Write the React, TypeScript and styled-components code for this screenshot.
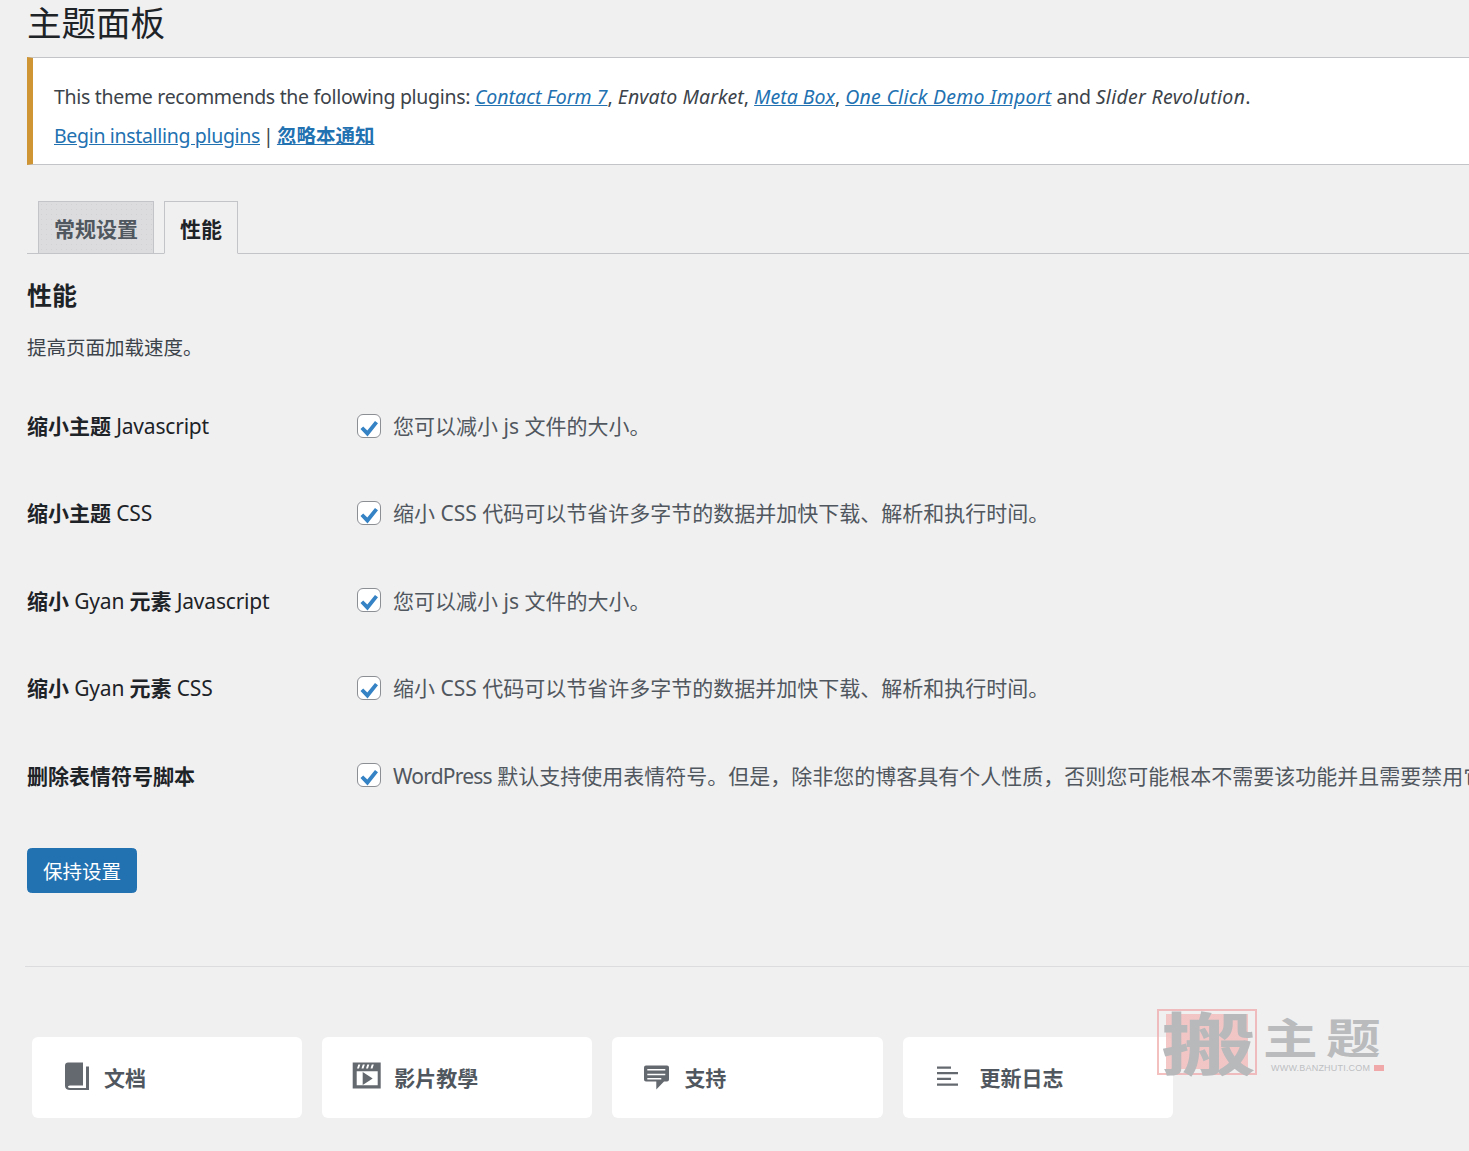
import React from 'react';
import styled, { createGlobalStyle } from 'styled-components';

const FONT = `"Noto Sans", "Noto Sans CJK SC", sans-serif`;

const GlobalStyle = createGlobalStyle`
	html, body {
		margin: 0;
		padding: 0;
		background: #f0f0f1;
	}
	body {
		font-family: ${FONT};
		color: #3c434a;
	}
`;

const Page = styled.div`
	position: relative;
	width: 1469px;
	height: 1151px;
	overflow: hidden;
	padding-left: 27px;
	box-sizing: border-box;
`;

const Title = styled.h1`
	margin: 0;
	height: 57px;
	font-size: 34.5px;
	font-weight: 400;
	line-height: 46px;
	color: #1d2327;
`;

const Notice = styled.div`
	width: 1500px;
	height: 108px;
	box-sizing: border-box;
	background: #fff;
	border: 1px solid #c3c4c7;
	border-left: 6px solid #cf9535;
	padding: 19px 0 0 21px;
	font-size: 19.5px;
	line-height: 39px;
	color: #3c434a;
`;

const NoticeLine = styled.div`
	white-space: nowrap;
`;

const Narrow = styled.span`
	letter-spacing: -0.31px;
`;

const Separator = styled.span`
	margin: 0 -2px;
`;

const Link = styled.a<{ $italic?: boolean; $bold?: boolean; $tracking?: number }>`
	color: #2271b1;
	text-decoration: underline;
	font-style: ${(p) => (p.$italic ? 'italic' : 'normal')};
	font-weight: ${(p) => (p.$bold ? 700 : 400)};
	letter-spacing: ${(p) => p.$tracking ?? 0}px;
`;

const Em = styled.em<{ $tracking?: number }>`
	font-style: italic;
	letter-spacing: ${(p) => p.$tracking ?? 0}px;
`;

const TabBar = styled.div`
	display: flex;
	align-items: flex-end;
	gap: 10px;
	margin-top: 36px;
	padding-left: 11px;
	height: 53px;
	box-sizing: border-box;
	border-bottom: 1px solid #c3c4c7;
`;

const Tab = styled.div<{ $active?: boolean }>`
	height: 53px;
	box-sizing: border-box;
	padding: 0 15px;
	margin-bottom: -1px;
	border: 1px solid #c3c4c7;
	border-bottom-color: ${(p) => (p.$active ? '#f0f0f1' : '#c3c4c7')};
	background-color: ${(p) => (p.$active ? '#f0f0f1' : '#dcdcde')};
	background-image: ${(p) => (p.$active ? 'none' : 'radial-gradient(#d2d2d5 0.6px, transparent 0.7px)')};
	background-size: 5px 5px;
	color: ${(p) => (p.$active ? '#1d2327' : '#50575e')};
	font-size: 21px;
	font-weight: 700;
	line-height: 55px;
`;

const SectionTitle = styled.h2`
	margin: 21px 0 0;
	font-size: 25px;
	line-height: 40px;
	font-weight: 700;
	color: #1d2327;
`;

const SectionIntro = styled.p`
	margin: 17px 0 0;
	font-size: 19.5px;
	line-height: 32px;
	color: #3c434a;
`;

const Rows = styled.div`
	margin-top: 46px;
	display: flex;
	flex-direction: column;
`;

const Row = styled.div`
	display: grid;
	grid-template-columns: 330px 1fr;
	height: 87.4px;
`;

const RowLabel = styled.div`
	font-size: 21px;
	font-weight: 600;
	line-height: 32px;
	color: #1d2327;
	white-space: nowrap;
`;

const RowLabelLatin = styled.span`
	font-weight: 400;
	letter-spacing: -0.2px;
`;

const RowField = styled.label`
	display: flex;
	align-items: flex-start;
	gap: 12px;
	font-size: 21px;
	line-height: 32px;
	color: #50575e;
	white-space: nowrap;
`;

const FieldWord = styled.span`
	letter-spacing: -0.8px;
`;

const Checkbox = styled.span`
	display: block;
	flex: none;
	width: 24px;
	height: 24px;
	box-sizing: border-box;
	margin-top: 3.5px;
	background: #fff;
	border: 1.5px solid #8c8f94;
	border-radius: 6px;
`;

const SaveButton = styled.button`
	display: block;
	margin-top: 1px;
	width: 110px;
	height: 45px;
	padding: 0;
	border: 1px solid #2271b1;
	border-radius: 4.5px;
	background: #2271b1;
	color: #fff;
	font-family: ${FONT};
	font-size: 19.5px;
`;

const Divider = styled.hr`
	margin: 73px 0 0 -2px;
	border: 0;
	border-top: 1px solid #dcdcde;
`;

const Cards = styled.div`
	display: flex;
	gap: 20px;
	margin: 70px 0 0 5px;
`;

const Card = styled.div`
	display: flex;
	align-items: center;
	width: 270.2px;
	height: 81px;
	box-sizing: border-box;
	padding-left: 32px;
	background: #fff;
	border-radius: 6px;
	font-size: 21px;
	font-weight: 600;
	color: #50575e;
`;

const CardIcon = styled.svg<{ $gap?: number }>`
	flex: none;
	width: 30px;
	height: 30px;
	margin-right: ${(p) => p.$gap ?? 10}px;
	fill: #646970;
	overflow: visible;
`;

const Watermark = styled.div`
	position: absolute;
	left: 1157px;
	top: 1009px;
	width: 230px;
	height: 68px;
	pointer-events: none;
`;

const Stamp = styled.div`
	position: absolute;
	left: 0;
	top: 0;
	width: 100px;
	height: 66px;
	box-sizing: border-box;
	padding: 3px 7px 4px;
	border: 2px solid rgba(240, 170, 170, 0.75);
	background: linear-gradient(rgba(243, 190, 190, 0.85), rgba(243, 190, 190, 0.85)) content-box;
`;

const StampGlyph = styled.span`
	position: absolute;
	left: 2px;
	top: -1px;
	color: #b7b9bb;
	font-size: 68px;
	font-weight: 700;
	line-height: 68px;
	transform: scaleX(1.4);
	transform-origin: 0 0;
`;

const BrandName = styled.div`
	position: absolute;
	left: 106px;
	top: 6px;
	color: #b9bbbd;
	font-size: 42px;
	font-weight: 700;
	letter-spacing: 6.5px;
	line-height: 46px;
	white-space: nowrap;
	transform: scaleX(1.3);
	transform-origin: 0 0;
`;

const BrandUrl = styled.div`
	position: absolute;
	left: 114px;
	top: 53px;
	color: #bdbfc1;
	font-family: "Liberation Sans", sans-serif;
	font-size: 9px;
	letter-spacing: 0.2px;
	line-height: 12px;
	white-space: nowrap;
`;

const BrandMark = styled.span`
	position: absolute;
	left: 217px;
	top: 56px;
	width: 10px;
	height: 6px;
	background: #f0a8a8;
`;

const Check = () => (
	<Checkbox>
		<svg width="21" height="21" viewBox="0 0 21 21">
			<path d="M2.500 11 5.200 8.400 9.300 12.600 17 3 20 5.300 9.500 18.500z" fill="#3582c4" />
		</svg>
	</Checkbox>
);

const rows = [
	{ bold: '缩小主题', latin: ' Javascript', text: '您可以减小 js 文件的大小。' },
	{ bold: '缩小主题', latin: ' CSS', text: '缩小 CSS 代码可以节省许多字节的数据并加快下载、解析和执行时间。' },
	{ bold: '缩小', latin: ' Gyan ', bold2: '元素', latin2: ' Javascript', text: '您可以减小 js 文件的大小。' },
	{ bold: '缩小', latin: ' Gyan ', bold2: '元素', latin2: ' CSS', text: '缩小 CSS 代码可以节省许多字节的数据并加快下载、解析和执行时间。' },
	{
		bold: '删除表情符号脚本',
		latin: '',
		word: 'WordPress',
		text: ' 默认支持使用表情符号。但是，除非您的博客具有个人性质，否则您可能根本不需要该功能并且需要禁用它。',
	},
];

const App: React.FC = () => (
	<Page>
		<GlobalStyle />
		<Title>主题面板</Title>
		<Notice>
			<NoticeLine>
				<Narrow>This theme recommends the following plugins: </Narrow>
				<Link $italic>Contact Form 7</Link>, <Em $tracking={0.1}>Envato Market</Em>, <Link $italic>Meta Box</Link>,{' '}
				<Link $italic $tracking={0.25}>
					One Click Demo Import
				</Link>{' '}
				<Narrow>and</Narrow> <Em $tracking={0.3}>Slider Revolution</Em>.
			</NoticeLine>
			<NoticeLine>
				<Link $tracking={-0.33}>Begin installing plugins</Link> <Separator>|</Separator> <Link $bold>忽略本通知</Link>
			</NoticeLine>
		</Notice>
		<TabBar>
			<Tab>常规设置</Tab>
			<Tab $active>性能</Tab>
		</TabBar>
		<SectionTitle>性能</SectionTitle>
		<SectionIntro>提高页面加载速度。</SectionIntro>
		<Rows>
			{rows.map((row, i) => (
				<Row key={i}>
					<RowLabel>
						{row.bold}
						<RowLabelLatin>{row.latin}</RowLabelLatin>
						{row.bold2}
						<RowLabelLatin>{row.latin2}</RowLabelLatin>
					</RowLabel>
					<RowField>
						<Check />
						<span>
							{row.word && <FieldWord>{row.word}</FieldWord>}
							{row.text}
						</span>
					</RowField>
				</Row>
			))}
		</Rows>
		<SaveButton>保持设置</SaveButton>
		<Divider />
		<Cards>
			<Card>
				<CardIcon viewBox="0 0 30 30">
					<path d="M4 .5h15v23H6c-1.500 0-2 .8-2 1.300 0 .5.5 1.200 2 1.200h16V4.500h3V28H6c-3 0-5-1.500-5-4V3.500C1 1.800 2.300.5 4 .5z" />
				</CardIcon>
				文档
			</Card>
			<Card>
				<CardIcon viewBox="0 0 30 30">
					<path
						fillRule="evenodd"
						d="M-1.300.5h28v26h-28zM2.700 9.200v14h21v-14zM4.300 2.500 3 6.500h2l1.300-4zM8.800 2.500 7.500 6.500h2l1.300-4zM13.300 2.500 12 6.500h2l1.300-4zM17.800 2.500 16.500 6.500h2l1.300-4z"
					/>
					<path d="M8.700 10 18.700 16.500 8.700 23z" />
				</CardIcon>
				影片教學
			</Card>
			<Card>
				<CardIcon viewBox="0 0 30 30">
					<path
						fillRule="evenodd"
						d="M2 3.500h21a2 2 0 0 1 2 2v12a2 2 0 0 1-2 2h-3L12.300 27.500v-8H2a2 2 0 0 1-2-2v-12a2 2 0 0 1 2-2zM3.300 7v1.500h18V7zM3.300 11.700v1.600h18v-1.600zM3.300 16v1.500h14V16z"
					/>
				</CardIcon>
				支持
			</Card>
			<Card>
				<CardIcon viewBox="0 0 30 30" $gap={15}>
					<path d="M2 4.500h14v2.300H2zM2 10h21v2.300H2zM2 15.700h14V18H2zM2 21.500h21v2.300H2z" />
				</CardIcon>
				更新日志
			</Card>
		</Cards>
		<Watermark>
			<Stamp>
				<StampGlyph>搬</StampGlyph>
			</Stamp>
			<BrandName>主题</BrandName>
			<BrandUrl>WWW.BANZHUTI.COM</BrandUrl>
			<BrandMark />
		</Watermark>
	</Page>
);

export default App;
